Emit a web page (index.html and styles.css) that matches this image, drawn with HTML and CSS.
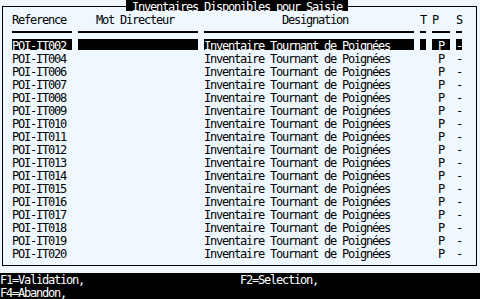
FILE: index.html
```html
<!DOCTYPE html>
<html lang="fr">
<head>
    <meta charset="UTF-8">
    <title>Inventaires Disponibles pour Saisie</title>
    <link rel="stylesheet" href="styles.css">
</head>
<body>

<div class="screen">
    <div class="frame">
        <div class="title-row"><span class="title"> Inventaires Disponibles pour Saisie </span></div>

        <div class="row head">
            <span class="cell c-ref">Reference</span>
            <span class="cell c-mot">Mot Directeur</span>
            <span class="cell c-des">Designation</span>
            <span class="cell c-t">T</span>
            <span class="cell c-p">P</span>
            <span class="cell c-s">S</span>
        </div>

        <div class="row rule">
            <span class="cell c-ref"></span>
            <span class="cell c-mot"></span>
            <span class="cell c-des"></span>
            <span class="cell c-t"></span>
            <span class="cell c-p"></span>
            <span class="cell c-s"></span>
        </div>

        <div class="row sel">
            <span class="cell c-ref">POI-IT002</span>
            <span class="cell c-mot"></span>
            <span class="cell c-des">Inventaire Tournant de Poignées</span>
            <span class="cell c-t"></span>
            <span class="cell c-p">P</span>
            <span class="cell c-s">-</span>
        </div>
        <div class="row">
            <span class="cell c-ref">POI-IT004</span>
            <span class="cell c-mot"></span>
            <span class="cell c-des">Inventaire Tournant de Poignées</span>
            <span class="cell c-t"></span>
            <span class="cell c-p">P</span>
            <span class="cell c-s">-</span>
        </div>
        <div class="row">
            <span class="cell c-ref">POI-IT006</span>
            <span class="cell c-mot"></span>
            <span class="cell c-des">Inventaire Tournant de Poignées</span>
            <span class="cell c-t"></span>
            <span class="cell c-p">P</span>
            <span class="cell c-s">-</span>
        </div>
        <div class="row">
            <span class="cell c-ref">POI-IT007</span>
            <span class="cell c-mot"></span>
            <span class="cell c-des">Inventaire Tournant de Poignées</span>
            <span class="cell c-t"></span>
            <span class="cell c-p">P</span>
            <span class="cell c-s">-</span>
        </div>
        <div class="row">
            <span class="cell c-ref">POI-IT008</span>
            <span class="cell c-mot"></span>
            <span class="cell c-des">Inventaire Tournant de Poignées</span>
            <span class="cell c-t"></span>
            <span class="cell c-p">P</span>
            <span class="cell c-s">-</span>
        </div>
        <div class="row">
            <span class="cell c-ref">POI-IT009</span>
            <span class="cell c-mot"></span>
            <span class="cell c-des">Inventaire Tournant de Poignées</span>
            <span class="cell c-t"></span>
            <span class="cell c-p">P</span>
            <span class="cell c-s">-</span>
        </div>
        <div class="row">
            <span class="cell c-ref">POI-IT010</span>
            <span class="cell c-mot"></span>
            <span class="cell c-des">Inventaire Tournant de Poignées</span>
            <span class="cell c-t"></span>
            <span class="cell c-p">P</span>
            <span class="cell c-s">-</span>
        </div>
        <div class="row">
            <span class="cell c-ref">POI-IT011</span>
            <span class="cell c-mot"></span>
            <span class="cell c-des">Inventaire Tournant de Poignées</span>
            <span class="cell c-t"></span>
            <span class="cell c-p">P</span>
            <span class="cell c-s">-</span>
        </div>
        <div class="row">
            <span class="cell c-ref">POI-IT012</span>
            <span class="cell c-mot"></span>
            <span class="cell c-des">Inventaire Tournant de Poignées</span>
            <span class="cell c-t"></span>
            <span class="cell c-p">P</span>
            <span class="cell c-s">-</span>
        </div>
        <div class="row">
            <span class="cell c-ref">POI-IT013</span>
            <span class="cell c-mot"></span>
            <span class="cell c-des">Inventaire Tournant de Poignées</span>
            <span class="cell c-t"></span>
            <span class="cell c-p">P</span>
            <span class="cell c-s">-</span>
        </div>
        <div class="row">
            <span class="cell c-ref">POI-IT014</span>
            <span class="cell c-mot"></span>
            <span class="cell c-des">Inventaire Tournant de Poignées</span>
            <span class="cell c-t"></span>
            <span class="cell c-p">P</span>
            <span class="cell c-s">-</span>
        </div>
        <div class="row">
            <span class="cell c-ref">POI-IT015</span>
            <span class="cell c-mot"></span>
            <span class="cell c-des">Inventaire Tournant de Poignées</span>
            <span class="cell c-t"></span>
            <span class="cell c-p">P</span>
            <span class="cell c-s">-</span>
        </div>
        <div class="row">
            <span class="cell c-ref">POI-IT016</span>
            <span class="cell c-mot"></span>
            <span class="cell c-des">Inventaire Tournant de Poignées</span>
            <span class="cell c-t"></span>
            <span class="cell c-p">P</span>
            <span class="cell c-s">-</span>
        </div>
        <div class="row">
            <span class="cell c-ref">POI-IT017</span>
            <span class="cell c-mot"></span>
            <span class="cell c-des">Inventaire Tournant de Poignées</span>
            <span class="cell c-t"></span>
            <span class="cell c-p">P</span>
            <span class="cell c-s">-</span>
        </div>
        <div class="row">
            <span class="cell c-ref">POI-IT018</span>
            <span class="cell c-mot"></span>
            <span class="cell c-des">Inventaire Tournant de Poignées</span>
            <span class="cell c-t"></span>
            <span class="cell c-p">P</span>
            <span class="cell c-s">-</span>
        </div>
        <div class="row">
            <span class="cell c-ref">POI-IT019</span>
            <span class="cell c-mot"></span>
            <span class="cell c-des">Inventaire Tournant de Poignées</span>
            <span class="cell c-t"></span>
            <span class="cell c-p">P</span>
            <span class="cell c-s">-</span>
        </div>
        <div class="row">
            <span class="cell c-ref">POI-IT020</span>
            <span class="cell c-mot"></span>
            <span class="cell c-des">Inventaire Tournant de Poignées</span>
            <span class="cell c-t"></span>
            <span class="cell c-p">P</span>
            <span class="cell c-s">-</span>
        </div>
    </div>

    <div class="footer">
        <div class="key-row">
            <span class="key">F1=Validation,</span>
            <span class="key">F2=Selection,</span>
        </div>
        <div class="key-row">
            <span class="key">F4=Abandon,</span>
        </div>
    </div>
</div>

</body>
</html>
```

FILE: styles.css
```css
body {
    margin: 0;
    background-color: #f0f8ff;
    overflow: hidden;
}

/* 80 x 23 terminal: one column is 6px, one row is 13px */
.screen {
    width: 480px;
    font-family: "DejaVu Sans Mono", "Liberation Mono", monospace;
    font-size: 12px;
    letter-spacing: -1.225px;
    color: #000;
}

.frame {
    box-sizing: border-box;
    width: 475px;
    height: 260px;
    margin: 6px 0 0 2px;
    padding-left: 9px;
    border: 1px solid #000;
}

.title-row {
    height: 13px;
    margin-top: -7px;
    padding-left: 114px;
}

.title {
    display: inline-block;
    height: 11px;
    line-height: 14px;
    background-color: #000;
    color: #fff;
    white-space: pre;
    vertical-align: top;
}

.row {
    display: flex;
    gap: 6px;
    height: 13px;
    align-items: flex-start;
}

.cell {
    display: block;
    box-sizing: border-box;
    height: 11px;
    padding-top: 1px;
    line-height: 12px;
    white-space: pre;
}

.c-ref { width: 60px; }
.c-mot { width: 120px; }
.c-des { width: 210px; }
.c-t { width: 6px; }
.c-p { width: 18px; text-align: center; }
.c-s { width: 6px; }

.head .c-mot { padding-left: 18px; }
.head .c-des { padding-left: 78px; }
.head .c-p { text-align: left; }

.rule .cell {
    height: 2px;
    padding: 0;
    margin-top: 5px;
    background-color: #000;
}

.sel .cell {
    background-color: #000;
    color: #fff;
}

.footer {
    margin-top: 7px;
    background-color: #000;
    color: #fff;
}

.key-row {
    display: flex;
    height: 13px;
}

.key {
    box-sizing: border-box;
    width: 240px;
    height: 13px;
    padding-top: 1px;
    line-height: 12px;
    white-space: pre;
}
```
